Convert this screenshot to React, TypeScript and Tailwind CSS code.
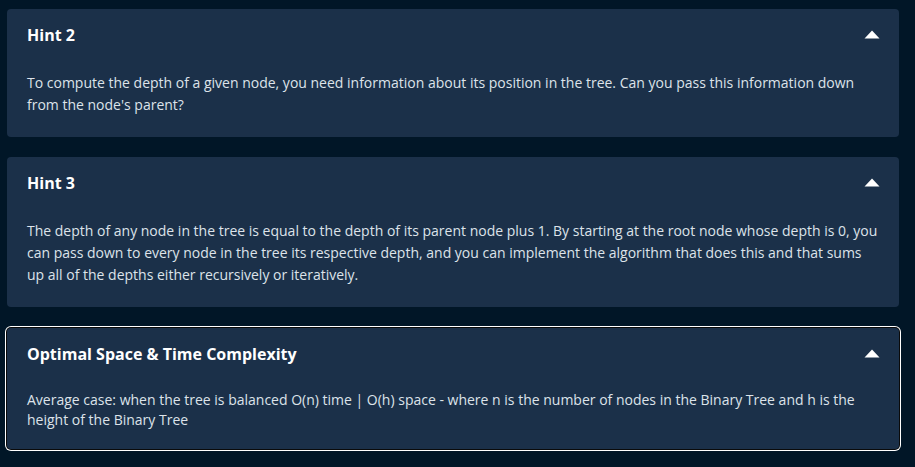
import React from 'react';

type Hint = {
  title: string;
  body: string;
  focused?: boolean;
  tight?: boolean;
};

const hints: Hint[] = [
  {
    title: 'Hint 2',
    body: "To compute the depth of a given node, you need information about its position in the tree. Can you pass this information down from the node's parent?",
  },
  {
    title: 'Hint 3',
    body: 'The depth of any node in the tree is equal to the depth of its parent node plus 1. By starting at the root node whose depth is 0, you can pass down to every node in the tree its respective depth, and you can implement the algorithm that does this and that sums up all of the depths either recursively or iteratively.',
  },
  {
    title: 'Optimal Space & Time Complexity',
    body: 'Average case: when the tree is balanced O(n) time | O(h) space - where n is the number of nodes in the Binary Tree and h is the height of the Binary Tree',
    focused: true,
    tight: true,
  },
];

const Caret = () => (
  <svg width="16" height="9" viewBox="0 0 16 9" className="block">
    <path d="M8 0.5 L15.5 8.5 L0.5 8.5 Z" fill="#ffffff" />
  </svg>
);

const HintCard = ({ hint }: { hint: Hint }) => (
  <div
    className={
      hint.focused
        ? 'mt-[1px] bg-[#1b3049] rounded-[4px] pt-4 pb-[19px] px-5 shadow-[0_0_0_1px_#0a0a0a,0_0_0_2px_#ffffff]'
        : 'bg-[#1b3049] rounded-[4px] pt-4 pb-[21px] px-5'
    }
  >
    {/* Header */}
    <div className="flex items-center justify-between h-5">
      <h3 className="text-white text-[16px] font-bold leading-5">{hint.title}</h3>
      <div className="-mr-[1px] -mt-[1px]">
        <Caret />
      </div>
    </div>

    {/* Body */}
    <p
      className={
        hint.tight
          ? 'mt-[26px] text-[14px] leading-5 text-[#dde3ea]'
          : 'mt-[27px] text-[14px] leading-[22px] text-[#dde3ea]'
      }
    >
      {hint.body}
    </p>
  </div>
);

export default function App() {
  return (
    <div
      className="min-h-screen bg-[#011627] pt-[9px] pl-[7px]"
      style={{ fontFamily: '"Open Sans", "Noto Sans", sans-serif' }}
    >
      <div className="w-[892px] flex flex-col gap-[20px]">
        {hints.map((h) => (
          <HintCard key={h.title} hint={h} />
        ))}
      </div>
    </div>
  );
}
